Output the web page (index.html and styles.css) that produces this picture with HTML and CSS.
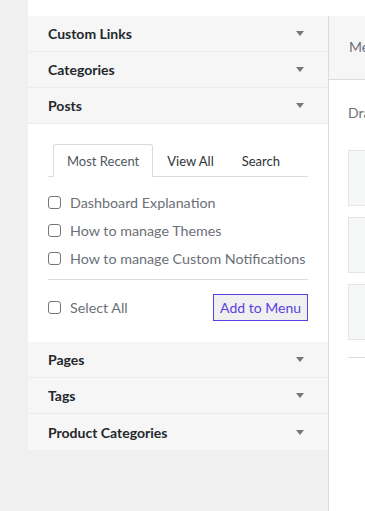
FILE: index.html
```html
<!DOCTYPE html>
<html lang="en">
<head>
  <meta charset="UTF-8" />
  <meta name="viewport" content="width=device-width, initial-scale=1.0"/>
  <title>Menus</title>
  <link rel="stylesheet" href="styles.css">
</head>
<body>

  <div class="topbar"></div>

  <div class="layout">
    <div class="sidebar">
      <div class="acc-head">Custom Links <span class="arrow"></span></div>
      <div class="acc-head">Categories <span class="arrow"></span></div>
      <div class="acc-head">Posts <span class="arrow"></span></div>

      <div class="acc-body">
        <div class="tabs">
          <span class="tab active">Most Recent</span>
          <span class="tab">View All</span>
          <span class="tab">Search</span>
        </div>

        <ul class="items">
          <li><label><span class="box"></span>Dashboard Explanation</label></li>
          <li><label><span class="box"></span>How to manage Themes</label></li>
          <li><label><span class="box"></span>How to manage Custom Notifications</label></li>
        </ul>

        <div class="actions">
          <label><span class="box"></span>Select All</label>
          <button class="btn-add">Add to Menu</button>
        </div>
      </div>

      <div class="acc-head">Pages <span class="arrow"></span></div>
      <div class="acc-head">Tags <span class="arrow"></span></div>
      <div class="acc-head">Product Categories <span class="arrow"></span></div>
    </div>

    <div class="main">
      <div class="main-head">Menu structure</div>
      <div class="main-body">
        <p class="hint">Drag the items into the order you prefer.</p>
        <div class="menu-item"></div>
        <div class="menu-item"></div>
        <div class="menu-item"></div>
        <div class="main-line"></div>
      </div>
    </div>
  </div>

</body>
</html>
```

FILE: styles.css
```css
body {
  margin: 0;
  font-family: Lato, "Liberation Sans", sans-serif;
  font-size: 14px;
  background-color: #f0f0f0;
  min-height: 511px;
  overflow: hidden;
}

.topbar {
  margin-left: 28px;
  height: 16px;
  background: white;
}

.layout {
  display: flex;
  margin-left: 28px;
  min-height: 495px;
}

.sidebar {
  width: 300px;
  flex-shrink: 0;
  align-self: flex-start;
}

.acc-head {
  display: flex;
  justify-content: space-between;
  align-items: center;
  height: 35px;
  padding: 0 24px 0 20px;
  background: #f6f6f6;
  border-bottom: 1px solid #ebebeb;
  font-weight: bold;
  color: #23282d;
}

.acc-head:last-child {
  border-bottom: none;
  height: 36px;
}

.arrow {
  width: 0;
  height: 0;
  border-left: 4px solid transparent;
  border-right: 4px solid transparent;
  border-top: 5px solid #777;
}

.acc-body {
  background: white;
  padding: 20px 20px 21px 20px;
}

.tabs {
  display: flex;
  margin-bottom: 11px;
  border-bottom: 1px solid #dcdcde;
}

.tab {
  padding: 8px 13px 8px 13px;
  font-size: 13px;
  color: #2c3338;
  border: 1px solid transparent;
  border-bottom: none;
  margin-bottom: -1px;
}

.tab.active {
  margin-left: 5px;
  border-color: #dcdcde;
  border-radius: 3px 3px 0 0;
  background: white;
  color: #50575e;
}

.items {
  list-style: none;
  margin: 0;
  padding: 0 0 7px 0;
  border-bottom: 1px solid #dcdcde;
}

.items li {
  height: 28px;
  display: flex;
  align-items: center;
}

label {
  display: flex;
  align-items: center;
  font-size: 14.3px;
  white-space: nowrap;
  color: #6b7077;
}

.box {
  flex-shrink: 0;
  width: 11px;
  height: 11px;
  border: 1px solid #767676;
  border-radius: 3px;
  margin-right: 9px;
}

.actions {
  display: flex;
  justify-content: space-between;
  align-items: center;
  margin-top: 14px;
}

.btn-add {
  font-family: inherit;
  font-size: 14px;
  padding: 4px 6px;
  background: #f0f0f1;
  color: #5b3fe0;
  border: 1px solid #5b3fe0;
  border-radius: 0;
}

.main {
  flex: 1;
  background: white;
  border-left: 1px solid #dcdcde;
  overflow: hidden;
  white-space: nowrap;
}

.main-head {
  height: 63px;
  line-height: 61px;
  padding-left: 20px;
  background: #f6f6f6;
  border-bottom: 1px solid #dcdcde;
  color: #6b7077;
}

.main-body {
  padding: 0 0 0 19px;
}

.hint {
  margin: 24px 0 29px 0;
  color: #6b7077;
}

.menu-item {
  height: 54px;
  margin-bottom: 11px;
  background: #f6f7f7;
  border: 1px solid #e5e5e5;
  border-right: none;
}

.main-line {
  border-top: 1px solid #dcdcde;
  margin-top: 17px;
}
```
